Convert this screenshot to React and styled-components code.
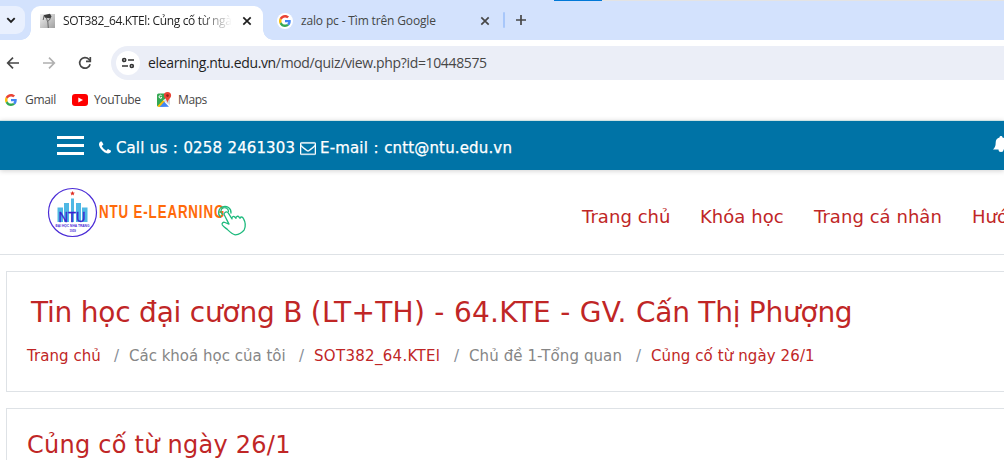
import React from "react";
import styled, { createGlobalStyle } from "styled-components";

const GlobalStyle = createGlobalStyle`
  * { box-sizing: border-box; }
  html, body { margin: 0; padding: 0; background: #fff; overflow: hidden; }
  svg { display: block; flex: none; }
`;

const uiFont = `"Open Sans", "Noto Sans", sans-serif`;
const pageFont = `"DejaVu Sans", Verdana, sans-serif`;

const Window = styled.div`
  width: 1004px;
  height: 460px;
  overflow: hidden;
  background: #fff;
  font-family: ${pageFont};
`;

const TabStrip = styled.div`
  position: relative;
  display: flex;
  height: 40px;
  background: #d3e2fd;
`;
const LoadMark = styled.div`
  position: absolute;
  top: 0;
  left: 554px;
  width: 450px;
  height: 1px;
  background: linear-gradient(to right, #0078d7 48px, #e3e3e3 48px);
`;
const TabSearch = styled.div`
  display: flex;
  align-items: center;
  width: 25px;
  height: 28px;
  margin-top: 6px;
  padding-left: 5px;
  border-radius: 0 9px 9px 0;
  background: #e9f0fe;
`;
const Tab = styled.div`
  position: relative;
  display: flex;
  align-items: center;
  width: ${(p) => p.$width}px;
  height: 34px;
  margin: 6px 0 0 ${(p) => p.$offset || 0}px;
  padding: 0 ${(p) => p.$end}px 5px ${(p) => p.$inset}px;
  border-radius: 9px 9px 0 0;
  background: ${(p) => (p.$active ? "#fff" : "transparent")};

  ${(p) =>
    p.$active &&
    `
    &::before, &::after {
      content: "";
      position: absolute;
      bottom: 0;
      width: 10px;
      height: 10px;
    }
    &::before { left: -10px; background: radial-gradient(circle at 0 0, transparent 9.5px, #fff 10px); }
    &::after { right: -10px; background: radial-gradient(circle at 100% 0, transparent 9.5px, #fff 10px); }
  `}
`;
const TabTitle = styled.span`
  flex: none;
  width: ${(p) => p.$width}px;
  margin-left: 8px;
  overflow: hidden;
  white-space: nowrap;
  font: 12px/18px ${uiFont};
  letter-spacing: ${(p) => p.$track}px;
  color: ${(p) => (p.$faded ? "#1f1f1f" : "#444746")};
  ${(p) => p.$faded && "mask-image: linear-gradient(to right, #000 135px, transparent 169px);"}
`;
const Spacer = styled.span`
  flex: 1;
`;
const Divider = styled.span`
  width: 2px;
  height: 16px;
  margin: 12px 11px 0 0;
  border-radius: 1px;
  background: #a8c7fa;
`;
const NewTab = styled.div`
  padding-top: 14px;
`;
const Favicon = styled.span`
  display: grid;
  place-items: center;
  flex: none;
  width: 16px;
  height: 16px;
  border-radius: ${(p) => (p.$round ? "8px" : "0")};
  background: ${(p) => (p.$round ? "#fff" : "none")};
`;

const Toolbar = styled.div`
  display: flex;
  align-items: center;
  height: 46px;
  padding-left: 6px;
`;
const NavButtons = styled.div`
  display: flex;
  gap: 22px;
  width: 105px;
`;
const AddressBar = styled.div`
  display: flex;
  align-items: center;
  flex: 1;
  height: 34px;
  padding-left: 5px;
  border-radius: 17px 0 0 17px;
  background: #ebeef7;
`;
const SiteInfo = styled.span`
  display: grid;
  place-items: center;
  width: 24px;
  height: 24px;
  border-radius: 12px;
  background: #fff;
`;
const Url = styled.span`
  margin-left: 8px;
  font: 14px/20px ${uiFont};
  letter-spacing: -0.35px;
  color: #474747;
  b { font-weight: 400; color: #1f1f1f; }
`;

const Bookmarks = styled.div`
  display: flex;
  align-items: center;
  height: 34px;
  padding: 0 0 6px 5px;
`;
const Bookmark = styled.div`
  display: flex;
  align-items: center;
  gap: ${(p) => p.$gap}px;
  width: ${(p) => p.$width}px;
  font: 12px/18px ${uiFont};
  letter-spacing: ${(p) => p.$track}px;
  color: #474747;
`;

const ContactBar = styled.div`
  position: relative;
  display: flex;
  align-items: center;
  height: 50px;
  padding: 0 0 0 57px;
  border-top: 1px solid #cfe3e3;
  background: #0073a6;
  box-shadow: 0 1px 5px rgba(0, 0, 0, 0.18);
`;
const Burger = styled.div`
  display: grid;
  gap: 5px;
  width: 27px;
  margin: 0 15px 1px 0;
  span { height: 3px; background: #fff; }
`;
const ContactIcon = styled.span`
  margin: 4px 0 0 ${(p) => p.$gap || 0}px;
`;
const Contact = styled.span`
  margin: 5px 0 0 ${(p) => p.$gap}px;
  white-space: nowrap;
  font-size: 15px;
  line-height: 22px;
  letter-spacing: ${(p) => p.$track}px;
  word-spacing: 0.6px;
  -webkit-text-stroke: 0.25px #fff;
  color: #fff;
`;
const Bell = styled.div`
  width: 13px;
  margin-bottom: 2px;
  overflow: hidden;
`;

const SiteHeader = styled.header`
  display: flex;
  height: 85px;
  padding-left: 47px;
  border-bottom: 1px solid #dee2e6;
`;
const Brand = styled.div`
  flex: none;
  width: 535px;
  padding-top: 16px;
`;
const Menu = styled.nav`
  display: flex;
  flex: none;
  padding-top: 34px;
`;
const MenuItem = styled.a`
  flex: none;
  width: ${(p) => p.$width}px;
  white-space: nowrap;
  font-size: 18px;
  line-height: 26px;
  letter-spacing: 0.05px;
  color: #c02626;
`;

const Card = styled.section`
  height: ${(p) => p.$height}px;
  margin: 16px 0 0 6px;
  padding: ${(p) => p.$pad}px 0 0 20px;
  border: 1px solid #dee2e6;
  border-right: 0;
  white-space: nowrap;
`;
const CourseTitle = styled.h1`
  margin: 0 0 0 4px;
  font-size: 28px;
  line-height: 40px;
  font-weight: 400;
  letter-spacing: 0;
  color: #c02626;
`;
const TitlePart = styled.span`
  letter-spacing: ${(p) => p.$track}px;
`;
const QuizTitle = styled.h2`
  margin: 0;
  font-size: 24px;
  line-height: 34px;
  font-weight: 400;
  letter-spacing: 0.25px;
  color: #c02626;
`;
const Crumbs = styled.div`
  display: flex;
  margin-top: 12px;
  font-size: 15px;
  line-height: 22px;
`;
const Crumb = styled.span`
  flex: none;
  width: ${(p) => p.$width}px;
  letter-spacing: ${(p) => p.$track}px;
  color: ${(p) => (p.$link ? "#c02626" : "#868686")};
`;
const Slash = styled.span`
  flex: none;
  width: 15px;
  color: #868e96;
`;

const GoogleG = ({ size }) => (
  <svg width={size} height={size} viewBox="0 0 48 48">
    <path fill="#ea4335" d="M24 9.5c3.54 0 6.71 1.22 9.21 3.6l6.85-6.85C35.9 2.38 30.47 0 24 0 14.62 0 6.51 5.38 2.56 13.22l7.98 6.19C12.43 13.72 17.74 9.5 24 9.5z" />
    <path fill="#4285f4" d="M46.98 24.55c0-1.57-.15-3.09-.38-4.55H24v9.02h12.94c-.58 2.96-2.26 5.48-4.78 7.18l7.73 6c4.51-4.18 7.09-10.36 7.09-17.65z" />
    <path fill="#fbbc05" d="M10.53 28.59c-.48-1.45-.76-2.99-.76-4.59s.27-3.14.76-4.59l-7.98-6.19C.92 16.46 0 20.12 0 24s.92 7.54 2.56 10.78l7.97-6.19z" />
    <path fill="#34a853" d="M24 48c6.48 0 11.93-2.13 15.89-5.81l-7.73-6c-2.15 1.45-4.92 2.3-8.16 2.3-6.26 0-11.57-4.22-13.47-9.91l-7.98 6.19C6.51 42.62 14.62 48 24 48z" />
  </svg>
);
const Close = ({ color }) => (
  <svg width="10" height="10" viewBox="0 0 10 10">
    <path d="M1.3 1.3l7.4 7.4M8.7 1.3L1.3 8.7" stroke={color} strokeWidth="1.7" />
  </svg>
);
const Arrow = ({ color, flip }) => (
  <svg width="14" height="14" viewBox="0 0 14 14" fill="none" stroke={color} strokeWidth="1.7">
    <path transform={flip ? "translate(14 0) scale(-1 1)" : undefined} d="M13 7H2.2M7 1.7L1.7 7 7 12.3" />
  </svg>
);
const ClassIcon = () => (
  <svg width="16" height="16" viewBox="0 0 16 16">
    <defs>
      <linearGradient id="tile" x1="0" x2="1" y1="0" y2="1">
        <stop offset="0" stopColor="#f2f2f2" />
        <stop offset="1" stopColor="#a0a0a0" />
      </linearGradient>
    </defs>
    <path fill="url(#tile)" d="M1 1h15v14H1z" />
    <path fill="#3c3c3c" d="M4.500 2.300l6.500-1.500 1.500 2.700-1 1.800-5.500-.5z" />
    <path fill="none" stroke="#666" strokeWidth="1" d="M5 3L4.200 7M7.500 5l1 3.500L10.500 7l.7-2M8.800 8.500L9.300 15" />
  </svg>
);
const MapsIcon = () => (
  <svg width="16" height="16" viewBox="0 0 16 16">
    <path fill="#34a853" d="M2.500 1.500H9v6L2 14.500a1.400 1.400 0 01-1-1V3a1.500 1.500 0 011.500-1.500z" />
    <path fill="#fbbc04" d="M1.500 14L8 7.500l1.800 1.800L4 15H2.500z" />
    <path fill="#e0e4e8" d="M8.500 7l5.500 5.500v1L7 8.500z" />
    <path fill="#4285f4" d="M3.500 15l4.700-5.200L13 14.800z" />
    <path fill="#cfd4d8" d="M9 8l5-1v6z" />
    <path fill="none" stroke="#fff" strokeWidth="1" d="M5.700 3.800a1.500 1.500 0 10.200 1.700H4.700" />
    <path fill="#ea4335" d="M11.500 0a3.600 3.600 0 00-3.600 3.600C7.900 6.400 10.800 7 11.500 11c.7-4 3.600-4.600 3.600-7.400A3.600 3.600 0 0011.500 0z" />
    <circle cx="11.500" cy="3.600" r="1.300" fill="#8c241c" />
  </svg>
);
const PhoneIcon = () => (
  <svg width="12" height="16" viewBox="0 0 1408 1792" fill="#fff">
    <path d="M1408 1240q0 27-10 70.500t-21 68.500q-21 50-122 106-94 51-186 51-27 0-53-3.500t-57.500-12.500-47-14.500-55.500-20.500-49-18q-98-35-175-83-127-79-264-216t-216-264q-48-77-83-175-3-9-18-49t-20.500-55.500-14.500-47-12.500-57.500-3.500-53q0-92 51-186 56-101 106-122 25-11 68.500-21t70.500-10q14 0 21 3 18 6 53 76 11 19 30 54t35 63.500 31 53.500q3 4 17.500 25t21.500 35.500 7 28.500q0 20-28.500 50t-62 55-62 53-28.500 46q0 9 5 22.500t8.500 20.500 14 24 11.500 19q76 137 174 235t235 174q2 1 19 11.500t24 14 20.500 8.500 22.500 5q18 0 46-28.500t53-62 55-62 50-28.500q14 0 28.500 7t35.500 21.500 25 17.500q25 15 53.500 31t63.500 35 54 30q70 35 76 53 3 7 3 21z" />
  </svg>
);
const MailIcon = () => (
  <svg width="16" height="16" viewBox="0 0 1792 1792" fill="#fff" stroke="#fff" strokeWidth="30">
    <path d="M1664 1504v-768q-32 36-69 66-268 206-426 338-51 43-83 67t-86.500 48.500-102.500 24.500h-2q-48 0-102.500-24.500t-86.500-48.500-83-67q-158-132-426-338-37-30-69-66v768q0 13 9.500 22.500t22.500 9.500h1472q13 0 22.500-9.500t9.500-22.500zm0-1051v-24.500l-.5-13-3-12.500-5.500-9-9-7.500-14-2.500h-1472q-13 0-22.500 9.500t-9.500 22.500q0 168 147 284 193 152 401 317 6 5 35 29.500t46 37.500 44.500 31.500 50.500 27.500 43 9h2q20 0 43-9t50.500-27.500 44.500-31.500 46-37.500 35-29.500q208-165 401-317 54-43 100.500-115.500t46.500-131.500zm128-37v1088q0 66-47 113t-113 47h-1472q-66 0-113-47t-47-113v-1088q0-66 47-113t113-47h1472q66 0 113 47t47 113z" />
  </svg>
);
const BrandLogo = () => (
  <svg width="202" height="52" viewBox="0 0 202 52">
    <circle cx="25.500" cy="26.500" r="24" fill="#fff" stroke="#4a2bd6" strokeWidth="1.200" />
    <path fill="#4fb8e4" d="M10.500 21.500h5.500v14.500h-5.500zM17 17h5v19h-5zM24 12.500h3v23.500h-3zM29 17h5v19h-5zM35 21.500h5.500v14.500H35z" />
    <path fill="#e02b20" d="M25.500 5l.7 1.600 1.700.1-1.300 1.100.4 1.700-1.500-.9-1.500.9.4-1.700-1.300-1.100 1.700-.1z" />
    <text x="11.500" y="35.800" textLength="27" lengthAdjust="spacingAndGlyphs" fontFamily="Liberation Sans, sans-serif" fontSize="14.500" fill="#3a1fd0" stroke="#3a1fd0" strokeWidth="0.300">NTU</text>
    <text x="8.500" y="41" textLength="34" lengthAdjust="spacingAndGlyphs" fontFamily="Liberation Sans, sans-serif" fontSize="4" fontWeight="700" fill="#4a2bd6">ĐẠI HỌC NHA TRANG</text>
    <text x="22.500" y="45.500" textLength="6.500" lengthAdjust="spacingAndGlyphs" fontFamily="Liberation Sans, sans-serif" fontSize="3.200" fontWeight="700" fill="#4a2bd6">1959</text>
    <text transform="translate(52 31.500) scale(0.72 1)" textLength="174" lengthAdjust="spacing" fontFamily="Liberation Sans, sans-serif" fontSize="18.500" fontWeight="700" fill="#ff6a0a">NTU E-LEARNING</text>
    <g fill="none" stroke="#1dba7d" strokeWidth="1.300" strokeLinecap="round" strokeLinejoin="round">
      <path d="M173.500 31a6.200 6.200 0 1110.500-4M175.500 28.500a3.800 3.800 0 116-3" />
      <path d="M178 26.500c1-1 2.500-.8 3.200.4l3.800 6c-.5-2 1.300-3.300 3-1.700l1 1c-.3-2 2-2.700 3.300-.9l.8 1c0-1.700 2.300-1.900 3.400.3 1.800 3.300 2.500 7.400.7 11.200-2 2.800-5.700 4.600-9 5-2.500-.6-5.200-2.800-7.700-5.200-2-1.700-4-2.800-5.200-4.600-.8-2 .9-3.200 2.700-2.500l4 1.600-4.800-9.400c-.4-.8-.1-1.600.8-2.200z" />
    </g>
  </svg>
);

export default function App() {
  return (
    <Window>
      <GlobalStyle />
      <TabStrip>
        <LoadMark />
        <TabSearch>
          <svg width="12" height="12" viewBox="0 0 12 12">
            <path d="M2.300 4.200L6 7.900l3.700-3.700" fill="none" stroke="#1f1f1f" strokeWidth="1.900" />
          </svg>
        </TabSearch>
        <Tab $active $width={232} $offset={6} $inset={8} $end={11}>
          <Favicon><ClassIcon /></Favicon>
          <TabTitle $width={169} $track={-0.35} $faded>SOT382_64.KTEl: Củng cố từ ngày 26/1</TabTitle>
          <Spacer />
          <Close color="#1f1f1f" />
        </Tab>
        <Tab $width={240} $inset={14} $end={13}>
          <Favicon $round><GoogleG size={12} /></Favicon>
          <TabTitle $width={170} $track={-0.15}>zalo pc - Tìm trên Google</TabTitle>
          <Spacer />
          <Close color="#474747" />
        </Tab>
        <Divider />
        <NewTab>
          <svg width="11" height="12" viewBox="0 0 11 12">
            <path d="M5 1v10M0 6h10" stroke="#474747" strokeWidth="1.700" />
          </svg>
        </NewTab>
      </TabStrip>
      <Toolbar>
        <NavButtons>
          <Arrow color="#474747" />
          <Arrow color="#b0b0b0" flip />
          <svg width="14" height="14" viewBox="0 0 14 14">
            <path d="M12.100 8.200A5.300 5.300 0 1110.900 3.300L12 4.500" fill="none" stroke="#474747" strokeWidth="1.700" />
            <path d="M12.300 1v4.300H8" fill="none" stroke="#474747" strokeWidth="1.700" />
          </svg>
        </NavButtons>
        <AddressBar>
          <SiteInfo>
            <svg width="14" height="12" viewBox="0 0 14 12" fill="none" stroke="#333" strokeWidth="1.700">
              <circle cx="3.200" cy="3" r="1.500" />
              <path d="M7 3h6M1 9h6" />
              <circle cx="10.800" cy="9" r="1.500" />
            </svg>
          </SiteInfo>
          <Url><b>elearning.ntu.edu.vn</b>/mod/quiz/view.php?id=10448575</Url>
        </AddressBar>
      </Toolbar>
      <Bookmarks>
        <Bookmark $width={67} $gap={8} $track={-0.3}><GoogleG size={12} />Gmail</Bookmark>
        <Bookmark $width={84} $gap={6} $track={-0.4}>
          <svg width="16" height="12" viewBox="0 0 16 12">
            <rect width="16" height="12" rx="3" fill="#f00" />
            <path d="M6.300 3.400L11 6 6.300 8.600z" fill="#fff" />
          </svg>
          YouTube
        </Bookmark>
        <Bookmark $width={60} $gap={6} $track={-0.4}><MapsIcon />Maps</Bookmark>
      </Bookmarks>
      <ContactBar>
        <Burger><span /><span /><span /></Burger>
        <ContactIcon><PhoneIcon /></ContactIcon>
        <Contact $gap={5} $track={0.1}>Call us : 0258 2461303</Contact>
        <ContactIcon $gap={5}><MailIcon /></ContactIcon>
        <Contact $gap={4} $track={0.15}>E-mail : cntt@ntu.edu.vn</Contact>
        <Spacer />
        <Bell>
          <svg width="20" height="18" viewBox="0 0 20 18" fill="#fff">
            <path d="M10 0c.9 0 1.500.6 1.500 1.400C14 2 15.300 4 15.300 6.500c0 3.600 1 5.500 2.700 7H2c1.700-1.500 2.700-3.400 2.700-7C4.700 4 6 2 8.500 1.400 8.500.6 9.100 0 10 0zM7.500 13.500h5a2.500 2.500 0 01-5 0z" />
          </svg>
        </Bell>
      </ContactBar>
      <SiteHeader>
        <Brand><BrandLogo /></Brand>
        <Menu>
          <MenuItem $width={118}>Trang chủ</MenuItem>
          <MenuItem $width={114}>Khóa học</MenuItem>
          <MenuItem $width={158}>Trang cá nhân</MenuItem>
          <MenuItem $width={120}>Hướng dẫn</MenuItem>
        </Menu>
      </SiteHeader>
      <Card $height={121} $pad={21}>
        <CourseTitle>
          <TitlePart $track={-0.22}>Tin học đại cương B </TitlePart>
          <TitlePart $track={0.28}>(LT+TH) - 64.KTE - GV. </TitlePart>
          <TitlePart $track={-0.25}>Cấn Thị Phượng</TitlePart>
        </CourseTitle>
        <Crumbs>
          <Crumb $link $width={87} $track={0.05}>Trang chủ</Crumb>
          <Slash>/</Slash>
          <Crumb $width={170} $track={0}>Các khoá học của tôi</Crumb>
          <Slash>/</Slash>
          <Crumb $link $width={140} $track={0.3}>SOT382_64.KTEl</Crumb>
          <Slash>/</Slash>
          <Crumb $width={167} $track={0.1}>Chủ đề 1-Tổng quan</Crumb>
          <Slash>/</Slash>
          <Crumb $link $width={170} $track={0.1}>Củng cố từ ngày 26/1</Crumb>
        </Crumbs>
      </Card>
      <Card $height={60} $pad={19}>
        <QuizTitle>Củng cố từ ngày 26/1</QuizTitle>
      </Card>
    </Window>
  );
}
